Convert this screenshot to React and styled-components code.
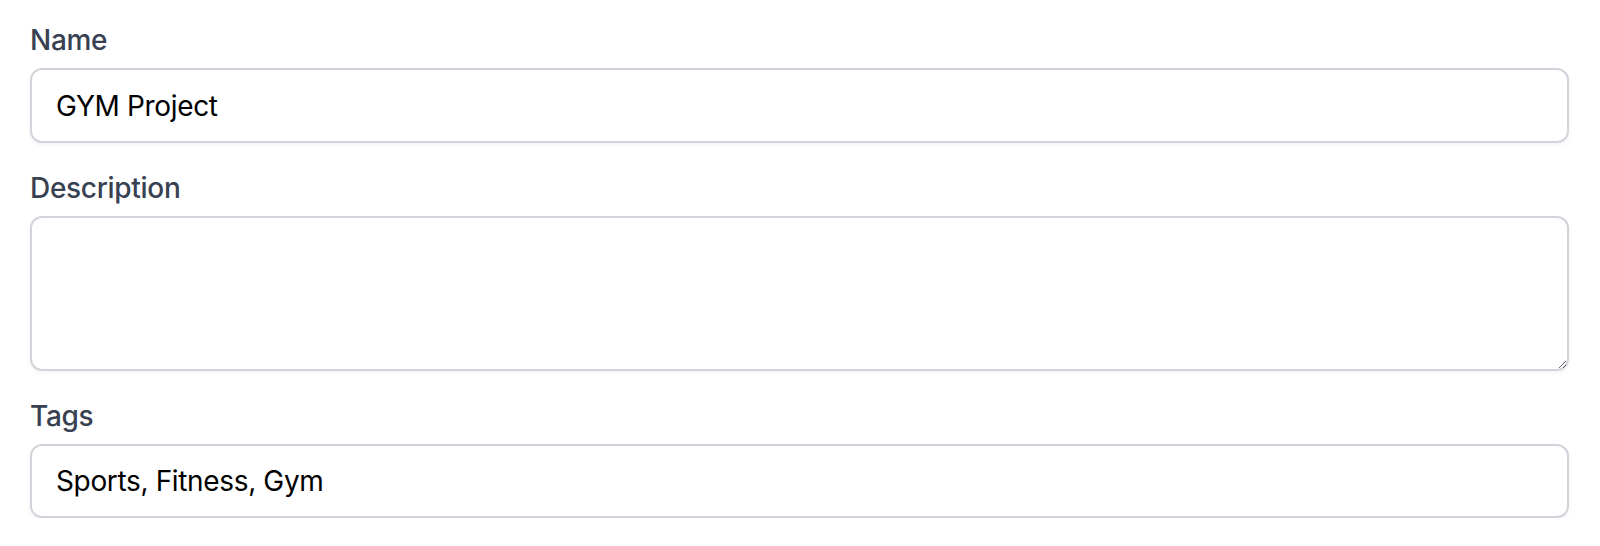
import React, { useState } from "react";
import styled, { createGlobalStyle } from "styled-components";

const GlobalStyle = createGlobalStyle`
  html, body {
    margin: 0;
    padding: 0;
    background: #ffffff;
  }
  body {
    font-family: Inter, "Noto Sans", "Liberation Sans", sans-serif;
  }
`;

const Form = styled.form`
  display: flex;
  flex-direction: column;
  gap: 25px;
  padding: 20px 31px 0 30px;
`;

const Field = styled.div`
  display: flex;
  flex-direction: column;
  gap: 8px;
`;

const Label = styled.label`
  display: block;
  font-size: 28px;
  line-height: 40px;
  font-weight: 500;
  letter-spacing: -0.3px;
  color: #374151;
`;

const Input = styled.input`
  box-sizing: border-box;
  width: 100%;
  height: ${({ $h }) => $h || 75}px;
  padding: 0 24px;
  border: 2px solid #d1d5db;
  border-radius: 12px;
  box-shadow: 0 2px 4px rgba(0, 0, 0, 0.05);
  font-family: inherit;
  font-size: 28px;
  letter-spacing: -0.35px;
  color: #000000;
  background: #ffffff;
  outline: none;
`;

const TextArea = styled.textarea`
  box-sizing: border-box;
  display: block;
  width: 100%;
  height: 155px;
  padding: 16px 24px;
  border: 2px solid #d1d5db;
  border-radius: 12px;
  box-shadow: 0 2px 4px rgba(0, 0, 0, 0.05);
  font-family: inherit;
  font-size: 28px;
  letter-spacing: -0.35px;
  color: #000000;
  background: #ffffff;
  outline: none;
  resize: vertical;
`;

const App = () => {
  const [name, setName] = useState("GYM Project");
  const [description, setDescription] = useState("");
  const [tags, setTags] = useState("Sports, Fitness, Gym");

  return (
    <>
      <GlobalStyle />
      <Form onSubmit={(e) => e.preventDefault()}>
        <Field>
          <Label htmlFor="name">Name</Label>
          <Input id="name" value={name} onChange={(e) => setName(e.target.value)} />
        </Field>
        <Field>
          <Label htmlFor="description">Description</Label>
          <TextArea
            id="description"
            value={description}
            onChange={(e) => setDescription(e.target.value)}
          />
        </Field>
        <Field>
          <Label htmlFor="tags">Tags</Label>
          <Input id="tags" $h={74} value={tags} onChange={(e) => setTags(e.target.value)} />
        </Field>
      </Form>
    </>
  );
};

export default App;
